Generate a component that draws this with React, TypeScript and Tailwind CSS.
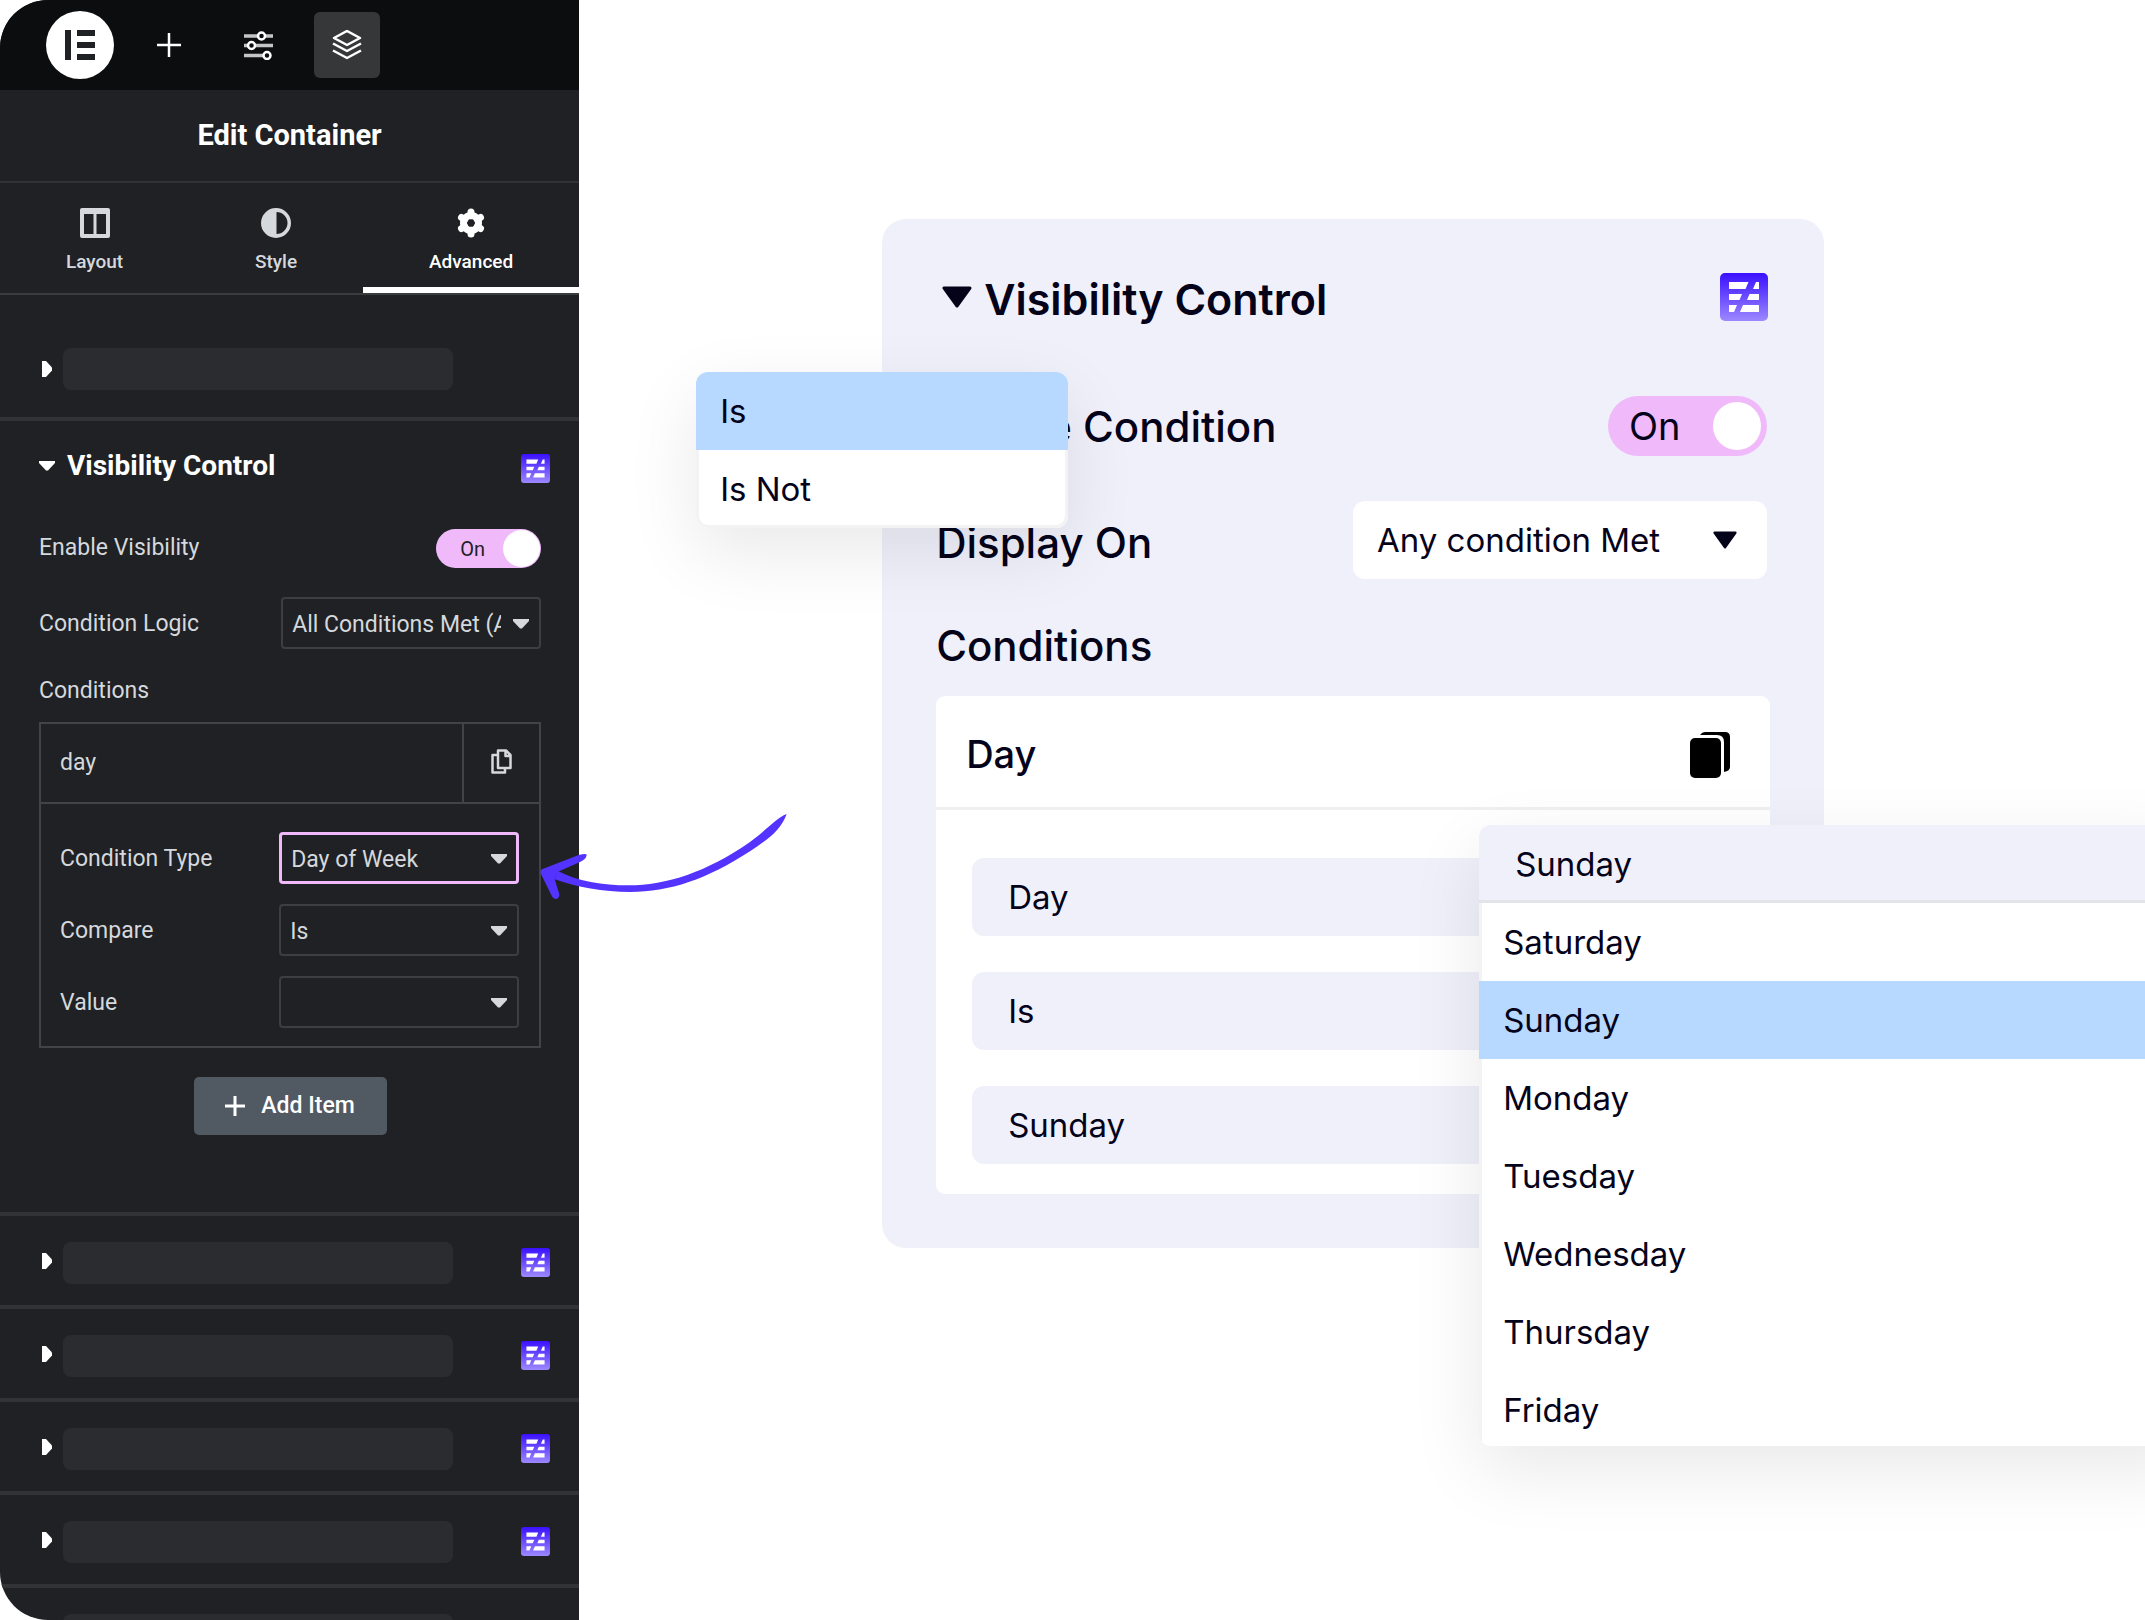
import React, { useId, useState } from 'react';

const EaLogo: React.FC<{ className?: string }> = ({ className = '' }) => {
  const id = useId();
  return (
    <svg viewBox="0 0 48 48" className={className} aria-hidden="true">
      <defs>
        <linearGradient id={id} x1="0" y1="0" x2="0" y2="1">
          <stop offset="0" stopColor="#3a10ff" />
          <stop offset="1" stopColor="#9d88ff" />
        </linearGradient>
      </defs>
      <rect width="48" height="48" rx="5" fill={`url(#${id})`} />
      <path
        fill="#fff"
        d="M9 9H28.5L25.5 16H9ZM36 9H39V16H33ZM9 21H22L19.5 27H9ZM29.5 21H39V27H27ZM9 32H17L14 39H9ZM23 32H39V39H20Z"
      />
    </svg>
  );
};

const CaretDown: React.FC<{ className?: string }> = ({ className = '' }) => (
  <svg viewBox="0 0 30 22" className={className} fill="currentColor" stroke="currentColor" strokeWidth="3" strokeLinejoin="round" aria-hidden="true">
    <path d="M2 2H28L15 20Z" />
  </svg>
);

const SmallCaretDown: React.FC<{ className?: string }> = ({ className = '' }) => (
  <svg viewBox="0 0 16 10" className={`h-[10px] w-4 ${className}`} fill="currentColor" aria-hidden="true">
    <path d="M0 0H16V2L9 9.500H7L0 2Z" />
  </svg>
);

const CaretRight = () => (
  <svg viewBox="0 0 10 16" className="h-4 w-[10px]" fill="#fff" aria-hidden="true">
    <path d="M0 0H4L10 6.500V9.500L4 16H0Z" />
  </svg>
);

interface PanelSelectProps {
  id: string;
  options: string[];
  width: string;
  active?: boolean;
}

const PanelSelect: React.FC<PanelSelectProps> = ({ id, options, width, active = false }) => (
  <div className={`relative ${width}`}>
    <select
      id={id}
      className={`h-[52px] w-full appearance-none rounded-[4px] bg-transparent pt-1 pr-[38px] pl-[9px] outline-none ${
        active ? 'border-3 border-[#f0b9fa]' : 'border-2 border-[#3c3e42]'
      }`}
    >
      {options.map(option => (
        <option key={option}>{option}</option>
      ))}
    </select>
    <SmallCaretDown className="pointer-events-none absolute top-[22px] right-3" />
  </div>
);

interface FieldSelectProps {
  label: string;
  options: string[];
}

const FieldSelect: React.FC<FieldSelectProps> = ({ label, options }) => (
  <select aria-label={label} className="h-[78px] w-full appearance-none rounded-[12px] bg-[#f0f0fa] px-9 pt-[2px] text-[33px]">
    {options.map(option => (
      <option key={option}>{option}</option>
    ))}
  </select>
);

const CollapsedSection = () => (
  <div className="flex h-[93px] shrink-0 items-start border-t-4 border-[#323337] pt-[26px] pr-[29px] pl-[42px]">
    <button type="button" aria-label="Expand section" className="flex">
      <span className="mt-[11px]">
        <CaretRight />
      </span>
      <span className="ml-[11px] h-[42px] w-[390px] rounded-lg bg-[#2b2c30]" />
    </button>
    <EaLogo className="mt-[6px] ml-auto size-[29px]" />
  </div>
);

const tabs = [
  {
    name: 'Layout',
    icon: (
      <svg viewBox="0 0 30 30" className="size-[30px]" aria-hidden="true">
        <path fill="currentColor" fillRule="evenodd" d="M2 0H28Q30 0 30 2V28Q30 30 28 30H2Q0 30 0 28V2Q0 0 2 0ZM4 6V26H13.5V6ZM16.5 6V26H26V6Z" />
      </svg>
    ),
  },
  {
    name: 'Style',
    icon: (
      <svg viewBox="0 0 30 30" className="size-[30px]" aria-hidden="true">
        <path fill="currentColor" fillRule="evenodd" d="M15 0A15 15 0 1 1 15 30A15 15 0 1 1 15 0ZM15.500 4V26A11 11 0 0 0 15.500 4Z" />
      </svg>
    ),
  },
  {
    name: 'Advanced',
    icon: (
      <svg viewBox="0 0 30 30" className="size-[30px]" aria-hidden="true">
        <circle cx="15" cy="15" r="7.500" fill="none" stroke="currentColor" strokeWidth="7" />
        <path
          stroke="currentColor"
          strokeWidth="7"
          strokeLinecap="round"
          d="M15 8V4M15 22V26M21 11.500L24.500 9.500M9 18.500L5.500 20.500M9 11.500L5.500 9.500M21 18.500L24.500 20.500"
        />
        <circle cx="15" cy="15" r="3.500" fill="#1f2124" />
      </svg>
    ),
  },
];

const days = ['Saturday', 'Sunday', 'Monday', 'Tuesday', 'Wednesday', 'Thursday', 'Friday'];

const TopBar = () => (
  <header className="flex h-[90px] shrink-0 items-center bg-[#0c0d0e] pl-[46px] text-white">
    <svg viewBox="0 0 68 68" className="size-[68px]" aria-hidden="true">
      <circle cx="34" cy="34" r="34" fill="#fff" />
      <path fill="#1f2124" d="M19 19H25V49H19ZM31 19H49V25H31ZM31 31H49V37H31ZM31 43H49V49H31Z" />
    </svg>
    <button type="button" aria-label="Add element" className="ml-[42px]">
      <svg viewBox="0 0 26 26" className="size-[26px]" stroke="currentColor" strokeWidth="2.500">
        <path d="M13 1V25M1 13H25" />
      </svg>
    </button>
    <button type="button" aria-label="Site settings" className="ml-[62px]">
      <svg viewBox="0 0 29 29" className="size-[29px]" fill="none" stroke="currentColor" strokeWidth="2.500">
        <path stroke="#c4c5c6" strokeWidth="3.500" d="M0 5H14M21 5H29M0 14.500H4M11 14.500H29M0 24.500H19" />
        <circle cx="17.500" cy="5" r="3.500" />
        <circle cx="7.500" cy="14.500" r="3.500" />
        <circle cx="23" cy="24.500" r="3.500" />
      </svg>
    </button>
    <button type="button" aria-label="Structure" className="ml-[41px] flex size-[66px] items-center justify-center rounded-[6px] bg-[#363739]">
      <svg viewBox="0 0 30 30" className="size-[30px]" fill="none" stroke="currentColor" strokeWidth="2.500" strokeLinejoin="round">
        <path d="M15 1L28 8L15 15L2 8ZM1 13.500L15 21L29 13.500M1 20.500L15 28L29 20.500" />
      </svg>
    </button>
  </header>
);

const EditorPanel = () => {
  const [activeTab, setActiveTab] = useState('Advanced');
  const [visible, setVisible] = useState(true);

  return (
    <aside className="flex h-screen w-[27%] shrink-0 flex-col overflow-hidden rounded-l-[48px] bg-[#1f2124] font-['Roboto',sans-serif] text-[23px] text-[#d5d8dc]">
      <TopBar />
      <h1 className="flex h-[93px] shrink-0 items-center justify-center border-b-2 border-[#303236] text-[29px] font-bold text-white">
        Edit Container
      </h1>

      {/* Tabs */}
      <nav className="flex h-[112px] shrink-0 border-b-2 border-[#3a3c40]">
        {tabs.map(tab => (
          <button
            key={tab.name}
            type="button"
            onClick={() => setActiveTab(tab.name)}
            className={`flex flex-auto flex-col items-center border-b-6 pt-[25px] text-[19px] font-medium ${
              tab.name === activeTab ? 'border-white text-white' : 'border-transparent'
            }`}
          >
            {tab.icon}
            <span className="mt-[10px]">{tab.name}</span>
          </button>
        ))}
      </nav>

      <div className="flex h-[122px] shrink-0 items-center pt-[26px] pl-[42px]">
        <button type="button" aria-label="Expand section" className="flex items-center">
          <CaretRight />
          <span className="ml-[11px] h-[42px] w-[390px] rounded-lg bg-[#2b2c30]" />
        </button>
      </div>

      {/* Visibility Control */}
      <section className="flex shrink-0 flex-col border-t-4 border-[#323337] pr-[38px] pb-[77px] pl-[39px]">
        <div className="mt-[21px] -mr-[9px] flex h-12 items-center">
          <SmallCaretDown className="mr-3 text-white" />
          <h2 className="text-[28px] font-bold text-white">Visibility Control</h2>
          <EaLogo className="mt-1 ml-auto size-[29px]" />
        </div>
        <div className="mt-[39px] flex h-[39px] items-center justify-between">
          <label htmlFor="enable-visibility">Enable Visibility</label>
          <label className="flex h-[39px] w-[105px] items-center justify-between rounded-full bg-[#f0b9fa] pr-px pl-6 text-[20px] text-[#1f2124]">
            <input
              id="enable-visibility"
              type="checkbox"
              className="sr-only"
              checked={visible}
              onChange={() => setVisible(!visible)}
            />
            On
            <span className="size-[37px] rounded-full bg-white" />
          </label>
        </div>
        <div className="mt-[29px] flex items-center justify-between">
          <label htmlFor="condition-logic" className="pt-[3px]">Condition Logic</label>
          <PanelSelect id="condition-logic" width="w-[260px]" options={['All Conditions Met (AND)', 'Any Condition Met (OR)']} />
        </div>
        <h3 className="mt-6 flex h-9 items-center">Conditions</h3>

        <div className="mt-[13px] border-2 border-[#414347]">
          <div className="flex h-20 items-stretch border-b-2 border-[#414347]">
            <div className="flex flex-1 items-center pl-[19px]">day</div>
            <button type="button" aria-label="Duplicate item" className="flex w-[77px] items-center justify-center border-l-2 border-[#414347] pb-1">
              <svg viewBox="0 0 21 25" className="h-[25px] w-[21px]" fill="none" stroke="currentColor" strokeWidth="2.500" strokeLinejoin="round">
                <path d="M7 1.500H15L19.500 6V19H7ZM14.500 2V7H19M7 6H1.500V23.500H14V19" />
              </svg>
            </button>
          </div>
          <div className="flex flex-col gap-5 pt-7 pr-5 pb-[18px] pl-[19px]">
            <div className="flex items-center justify-between">
              <label htmlFor="condition-type" className="pt-[3px]">Condition Type</label>
              <PanelSelect id="condition-type" width="w-[240px]" options={['Day of Week', 'Date', 'Time']} active />
            </div>
            <div className="flex items-center justify-between">
              <label htmlFor="compare" className="pt-[3px]">Compare</label>
              <PanelSelect id="compare" width="w-[240px]" options={['Is', 'Is Not']} />
            </div>
            <div className="flex items-center justify-between">
              <label htmlFor="value" className="pt-[3px]">Value</label>
              <PanelSelect id="value" width="w-[240px]" options={['', ...days]} />
            </div>
          </div>
        </div>

        <button
          type="button"
          className="mt-[29px] flex h-[58px] w-[193px] items-center justify-center gap-4 self-center rounded-[5px] bg-[#515962] font-medium text-white"
        >
          <svg viewBox="0 0 20 20" className="size-5" stroke="currentColor" strokeWidth="3">
            <path d="M10 0V20M0 10H20" />
          </svg>
          Add Item
        </button>
      </section>

      <CollapsedSection />
      <CollapsedSection />
      <CollapsedSection />
      <CollapsedSection />
      <CollapsedSection />
    </aside>
  );
};

const VisibilityCard = () => {
  const [enabled, setEnabled] = useState(true);
  const [compare, setCompare] = useState('Is');
  const [day, setDay] = useState('Sunday');

  return (
    <section className="relative rounded-[24px] bg-[#f0f0fa] px-[54px] pt-[54px] pb-[54px]">
      <div className="flex h-12 items-center pr-[2px] pl-[6px]">
        <CaretDown className="mr-3 h-[22px] w-[30px]" />
        <h2 className="pt-[3px] text-[43px] leading-[48px] font-semibold">Visibility Control</h2>
        <EaLogo className="ml-auto size-12" />
      </div>

      <div className="mt-[75px] flex h-[60px] items-center justify-between pr-[3px]">
        <label htmlFor="enable-condition">Enable Condition</label>
        <label className="flex h-[60px] w-[159px] items-center justify-between rounded-full bg-[#f0b9fa] pr-[6px] pl-[21px] text-[38px] font-normal">
          <input
            id="enable-condition"
            type="checkbox"
            className="sr-only"
            checked={enabled}
            onChange={() => setEnabled(!enabled)}
          />
          On
          <span className="size-12 rounded-full bg-white" />
        </label>
      </div>

      <div className="mt-[45px] flex items-center justify-between pr-[3px]">
        <label htmlFor="display-on" className="pt-1">Display On</label>
        <div className="relative w-[414px]">
          <select id="display-on" className="h-[78px] w-full appearance-none rounded-[12px] bg-white pt-[2px] pl-6 text-[33px] font-normal">
            <option>Any condition Met</option>
            <option>All conditions Met</option>
          </select>
          <CaretDown className="pointer-events-none absolute top-[30px] right-[30px] h-[18px] w-6" />
        </div>
      </div>

      <h3 className="mt-9 flex h-[60px] items-center">Conditions</h3>

      <div className="mt-[21px] rounded-[9px] bg-white font-normal">
        <div className="flex h-[114px] items-center justify-between border-b-3 border-[#f0f0f0] pt-[6px] pr-10 pl-[30px]">
          <span className="text-[38px] font-medium">Day</span>
          <button type="button" aria-label="Duplicate condition">
            <svg viewBox="0 0 40 46" className="h-[46px] w-10" fill="#000">
              <rect y="6" width="31" height="40" rx="5" />
              <path d="M10 3Q12 0 15 0H35Q40 0 40 5V35Q40 39 34 40V10Q34 3 27 3Z" />
            </svg>
          </button>
        </div>
        <div className="flex flex-col gap-9 px-9 pt-12 pb-[30px]">
          <FieldSelect label="Condition" options={['Day', 'Date', 'Time']} />
          <FieldSelect label="Compare" options={['Is', 'Is Not']} />
          <FieldSelect label="Value" options={['Sunday', ...days.filter(d => d !== 'Sunday')]} />
        </div>
      </div>

      {/* Compare menu */}
      <ul className="absolute top-[153px] -left-[186px] w-[372px] overflow-hidden rounded-[12px] bg-white text-[33px] font-normal shadow-[0_24px_72px_rgba(0,0,0,0.09)]">
        {['Is', 'Is Not'].map(item => (
          <li key={item}>
            <button
              type="button"
              onClick={() => setCompare(item)}
              className={`flex h-[78px] w-full items-center ${
                item === compare ? 'bg-[#b7d8ff] pt-[2px] pl-6' : 'rounded-b-[12px] border-3 border-t-0 border-[#f3f3f3] pt-1 pl-[21px]'
              }`}
            >
              {item}
            </button>
          </li>
        ))}
      </ul>

      {/* Day menu */}
      <div className="absolute top-[606px] left-[597px] w-[720px] overflow-hidden rounded-[12px] bg-white text-[33px] font-normal shadow-[0_24px_72px_rgba(0,0,0,0.09)]">
        <button type="button" className="flex h-[78px] w-full items-center border-b-3 border-[#e3e3ea] bg-[#f0f0fa] pt-1 pl-9">
          {day}
        </button>
        <ul className="-mb-[3px]">
          {days.map(item => (
            <li key={item}>
              <button
                type="button"
                onClick={() => setDay(item)}
                className={`flex h-[78px] w-full items-center border-l-3 pt-[2px] pl-[21px] ${
                  item === day ? 'border-[#b7d8ff] bg-[#b7d8ff]' : 'border-[#f3f3f3]'
                }`}
              >
                {item}
              </button>
            </li>
          ))}
        </ul>
      </div>
    </section>
  );
};

export default function App() {
  return (
    <div className="flex h-screen overflow-hidden bg-white">
      <EditorPanel />
      <main className="relative min-w-0 flex-1 pt-[219px] pr-[321px] pl-[303px] font-['Inter',sans-serif] text-[42px] font-medium text-[#05031a]">
        <VisibilityCard />
        {/* Arrow that points at the condition type */}
        <svg viewBox="0 0 900 420" className="absolute top-[780px] -left-[59px] h-[140px] w-[300px]" fill="#5533ff" aria-hidden="true">
          <path d="M800 102C768 114 742 148 690 186C560 276 440 316 325 316C250 316 170 303 112 272L104 298C170 322 250 336 330 336C450 336 560 298 690 214C750 174 782 150 800 102Z" />
          <path d="M66 268L176 225Q202 218 200 226Q198 238 180 246L112 276L104 298L118 343Q118 357 106 357Q98 356 94 345L64 284Q58 274 66 268Z" />
        </svg>
      </main>
    </div>
  );
}
